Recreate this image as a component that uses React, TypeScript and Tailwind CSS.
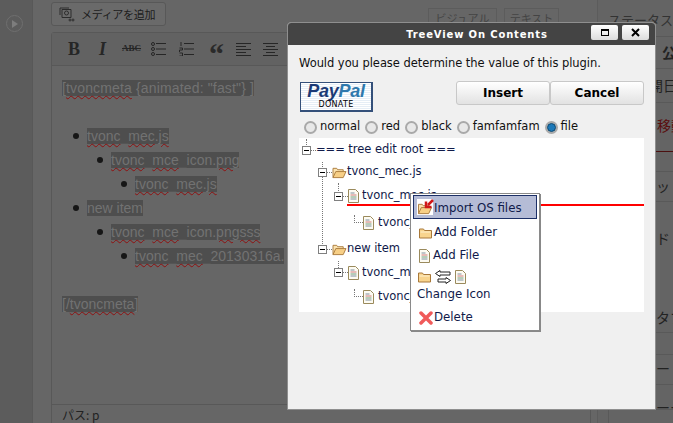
import React from "react";

const W = ({ children }: { children: React.ReactNode }) => (
  <span className="underline decoration-wavy decoration-[#8f1010] decoration-1 underline-offset-2">{children}</span>
);
const U = () => <span className="text-[#555555]">_</span>;

const Sel = ({ children }: { children: React.ReactNode }) => <span className="bg-[#4e4e4e] text-[#727272]">{children}</span>;

const Li = ({ indent, children }: { indent: string; children: React.ReactNode }) => (
  <div className={`flex items-center h-[24px] ${indent}`}>
    <span className="w-[6px] h-[6px] rounded-full bg-[#161616] mr-[8px] shrink-0" />
    <span className="whitespace-nowrap">{children}</span>
  </div>
);

const FolderOpen = ({ className = "" }: { className?: string }) => (
  <svg viewBox="0 0 16 14" className={className}>
    <path d="M1 12.5V2.5h4l1 1.5h6v2" fill="#fbe3b0" stroke="#a9793a" />
    <path d="M1 12.5L4 6h11l-3 6.5z" fill="#f7cf86" stroke="#a9793a" strokeLinejoin="round" />
  </svg>
);

const FolderClosed = ({ className = "" }: { className?: string }) => (
  <svg viewBox="0 0 13 12" className={className}>
    <path d="M.5 11V2h4l1 1.5h7V11z" fill="#f8d48e" stroke="#a9793a" strokeLinejoin="round" />
    <path d="M1.5 5h10" stroke="#fdf0cf" />
  </svg>
);

const FileIcon = ({ className = "" }: { className?: string }) => (
  <svg viewBox="0 0 11 14" className={className}>
    <path d="M.5.5h7l3 3v10H.5z" fill="#fdfbf2" stroke="#9a8a5c" />
    <path d="M2.5 4h4" stroke="#7f8f9f" />
    <path d="M2.5 6h6" stroke="#d07a7a" />
    <path d="M2.5 8h6" stroke="#6f9f7f" />
    <path d="M2.5 10h6" stroke="#7f8f9f" />
  </svg>
);

const Expander = () => (
  <span className="w-[9px] h-[9px] border border-[#808080] bg-white flex items-center justify-center shrink-0">
    <span className="w-[5px] h-px bg-black" />
  </span>
);

const Radio = ({ on }: { on?: boolean }) => (
  <span className="w-[13px] h-[13px] rounded-full border-2 border-[#a9a9a9] bg-[#e8e8e8] flex items-center justify-center shrink-0">
    {on && <span className="w-[9px] h-[9px] rounded-full bg-[#1b78b8] border border-[#0d4468]" />}
  </span>
);

const Cjk = "[font-family:'Noto_Sans_CJK_JP','Liberation_Sans',sans-serif]";

const TreeRow = ({
  h,
  pl,
  children,
  lines,
}: {
  h: string;
  pl: string;
  children: React.ReactNode;
  lines?: React.ReactNode;
}) => (
  <div className={`relative flex items-center whitespace-nowrap ${h} ${pl}`}>
    {lines}
    {children}
  </div>
);

const Dot = ({ className }: { className: string }) => <span className={`absolute border-dotted border-[#777] ${className}`} />;

export default function App() {
  return (
    <div className="relative w-[673px] h-[423px] overflow-hidden flex bg-[#666666] [font-family:'Liberation_Sans',sans-serif]">
      {/* left admin menu */}
      <div className="w-[33px] h-full bg-[#5c5c5c] border-r border-[#585858] shrink-0 pt-[15px] pl-[6px]">
        <div className="w-[17px] h-[17px] rounded-full border border-[#6f6f6f] flex items-center justify-center">
          <svg viewBox="0 0 8 8" className="w-[8px] h-[8px]">
            <path d="M1 0l6 4-6 4z" fill="#7d7d7d" />
          </svg>
        </div>
      </div>

      {/* editor column */}
      <div className="w-[564px] shrink-0 pl-[18px] flex flex-col">
        <div className="h-[32px] flex items-start">
          <div className="mt-[2px] w-[115px] h-[24px] rounded-[3px] border border-[#585858] bg-[#6a6a6a] flex items-center pl-[7px] gap-[6px]">
            <svg viewBox="0 0 16 16" className="w-[16px] h-[16px] shrink-0" fill="none" stroke="#2c2c2c">
              <path d="M3 3.5h9v8H3z" />
              <circle cx="7.5" cy="7" r="2" />
              <path d="M1 2v7M1 2h9" />
              <circle cx="11" cy="14" r="1" />
              <circle cx="14" cy="14" r="1" />
            </svg>
            <span className={`text-[11px] tracking-[-0.3px] leading-none whitespace-nowrap text-[#1c1c1c] ${Cjk}`}>メディアを追加</span>
          </div>
          <div className="ml-[262px] mt-[8px] w-[69px] h-[20px] border border-[#5c5c5c] flex justify-center pt-[4px]">
            <span className={`text-[11px] leading-none whitespace-nowrap text-[#444] ${Cjk}`}>ビジュアル</span>
          </div>
          <div className="ml-[7px] mt-[8px] w-[55px] h-[20px] border border-[#5c5c5c] flex justify-center pt-[4px]">
            <span className={`text-[11px] leading-none whitespace-nowrap text-[#444] ${Cjk}`}>テキスト</span>
          </div>
        </div>
        <div className="flex-1 mr-[6px] mb-[-20px] border border-[#585858] rounded-t-[3px] flex flex-col">
          <div className="h-[33px] bg-[#626262] border-b border-[#585858] flex items-center pl-[16px] shrink-0 text-[#262626]">
            <span className="w-[31px] text-[18px] font-bold [font-family:'Liberation_Serif',serif]">B</span>
            <span className="w-[23px] text-[18px] font-bold italic [font-family:'Liberation_Serif',serif]">I</span>
            <span className="w-[29px] text-[9px] font-bold line-through [font-family:'Liberation_Serif',serif]">ABC</span>
            <svg viewBox="0 0 16 14" className="w-[16px] h-[14px] mr-[12px]" fill="none" stroke="#262626">
              <circle cx="2" cy="2" r="1.5" />
              <circle cx="2" cy="7" r="1.5" />
              <circle cx="2" cy="12" r="1.5" />
              <path d="M5 1.5h10M5 7h10M5 12.5h10" />
            </svg>
            <svg viewBox="0 0 16 14" className="w-[16px] h-[14px] mr-[14px]" fill="none" stroke="#262626">
              <path d="M2 0v4M.5 6h3v2h-3v2M.5 11h3v3h-3" />
              <path d="M5 1.5h10M5 7h10M5 12.5h10" />
            </svg>
            <span className="w-[27px] h-[20px] text-[30px] leading-[30px] font-bold text-[#2a2a2a] [font-family:'Liberation_Serif',serif]">“</span>
            <svg viewBox="0 0 15 13" className="w-[15px] h-[13px] mr-[12px]" stroke="#262626">
              <path d="M0 .5h15M0 3.5h10M0 6.5h15M0 9.5h10M0 12.5h15" />
            </svg>
            <svg viewBox="0 0 15 13" className="w-[15px] h-[13px]" stroke="#262626">
              <path d="M0 .5h15M3 3.5h9M0 6.5h15M3 9.5h9M0 12.5h15" />
            </svg>
          </div>
          <div className="flex-1 pl-[10px] pt-[10px] text-[14px] text-[#727272] leading-[24px]">
            <div className="h-[24px] whitespace-nowrap tracking-[0.15px]">
              <Sel>
                [<W>tvoncmeta</W> {"{animated: \"fast\"}"} ]
              </Sel>
            </div>
            <div className="h-[24px]" />
            <div>
              <Li indent="pl-[11px]">
                <Sel>
                  <W>tvonc</W>
                  <U />
                  <W>mec</W>.<W>js</W>
                </Sel>
              </Li>
              <Li indent="pl-[35px]">
                <Sel>
                  <W>tvonc</W>
                  <U />
                  <W>mce</W>
                  <U />
                  icon.<W>png</W>
                </Sel>
              </Li>
              <Li indent="pl-[59px]">
                <Sel>
                  <W>tvonc</W>
                  <U />
                  <W>mec</W>.<W>js</W>
                </Sel>
              </Li>
              <Li indent="pl-[11px]">
                <Sel>new item</Sel>
              </Li>
              <Li indent="pl-[35px]">
                <Sel>
                  <W>tvonc</W>
                  <U />
                  <W>mce</W>
                  <U />
                  icon.<W>pngsss</W>
                </Sel>
              </Li>
              <Li indent="pl-[59px]">
                <Sel>
                  <W>tvonc</W>
                  <U />
                  <W>mec</W>
                  <U />
                  20130316a.
                </Sel>
              </Li>
            </div>
            <div className="mt-[24px] h-[24px] whitespace-nowrap">
              <Sel>
                [/<W>tvoncmeta</W>]
              </Sel>
            </div>
          </div>
          <div className={`h-[38px] border-t border-[#585858] shrink-0 pl-[10px] pt-[1px] text-[12px] text-[#222] ${Cjk}`}>パス: p</div>
        </div>
      </div>

      {/* right column */}
      <div className={`flex-1 border-l border-[#5c5c5c] bg-[#646464] text-[14px] text-[#222] whitespace-nowrap ${Cjk}`}>
        <div className="h-[37px] border-b border-[#595959] pl-[10px] pt-[13px] text-[13px] text-[#333] leading-none">ステータス: 公開</div>
        <div className="h-[32px] border-b border-[#595959] pl-[64px] font-bold flex items-center">公</div>
        <div className="h-[34px] border-b border-[#595959] flex items-center pl-[37px]">公開日時</div>
        <div className="h-[49px] border-b border-[#4c1010] pl-[59px] pt-[12px] text-[#5a0f0f]">移動</div>
        <div className="h-[20px] border-b border-[#595959]" />
        <div className="h-[30px] border-b border-[#595959] pl-[58px] pt-[4px]">ット</div>
        <div className="h-[131px] border-b border-[#595959] pl-[58px] pt-[26px] pb-[4px] flex flex-col justify-between">
          <span>ド</span>
          <span>タブ</span>
        </div>
        <div className="h-[21px]" />
        <div className="h-[31px] border-y border-[#595959] pl-[58px] pt-[3px]">ー</div>
        <div className="h-[25px] border-b border-[#595959] pl-[58px] leading-[44px]">ーー</div>
        <div className="h-[13px] ml-[10px] border-l border-[#595959]" />
      </div>

      {/* dialog */}
      <div className="absolute left-[287px] top-[22px] w-[369px] h-[388px] bg-[#f0f0f0] border border-[#8f8f8f] rounded-t-[4px] flex flex-col [font-family:'DejaVu_Sans',sans-serif]">
        <div className="relative h-[22px] bg-[#444444] rounded-t-[3px] flex items-center justify-center pl-[11px] shrink-0">
          <span className="text-[10px] font-bold text-white tracking-[0.85px]">TreeView On Contents</span>
          <div className="absolute right-[6px] top-[2px] flex gap-[4px]">
            <div className="w-[27px] h-[15px] rounded-[2px] bg-gradient-to-b from-white to-[#dcdcdc] flex items-center justify-center">
              <span className="w-[8px] h-[7px] border border-black border-t-2" />
            </div>
            <div className="w-[27px] h-[15px] rounded-[2px] bg-gradient-to-b from-white to-[#dcdcdc] flex items-center justify-center">
              <svg viewBox="0 0 9 9" className="w-[9px] h-[9px]">
                <path d="M1 1l7 7M8 1l-7 7" stroke="#000" strokeWidth="2" />
              </svg>
            </div>
          </div>
        </div>
        <div className="flex-1 px-[11px] flex flex-col min-h-0">
          <p className="mt-[11px] text-[11.5px] leading-[14px] text-[#111] tracking-[-0.05px] whitespace-nowrap">Would you please determine the value of this plugin.</p>
          <div className="mt-[11px] flex items-start justify-between">
            <div className="mt-px ml-[1px] w-[73px] h-[30px] border border-[#34507a] border-r-2 border-b-2 bg-[repeating-linear-gradient(180deg,#ffffff_0px,#ffffff_1px,#e6eef6_1px,#e6eef6_2px)] flex flex-col items-center">
              <span className="text-[18px] leading-[17px] font-bold italic [font-family:'Liberation_Sans',sans-serif] tracking-[-0.3px]">
                <span className="text-[#1b3a76]">Pay</span>
                <span className="text-[#2f79ad]">Pal</span>
              </span>
              <span className="text-[8px] leading-[9px] text-black tracking-[0.3px]">DONATE</span>
            </div>
            <div className="flex">
              <button className="w-[94px] h-[24px] rounded-[3px] border border-[#c8c8c8] bg-gradient-to-b from-white to-[#e2e2e2] text-[12px] font-bold text-black">Insert</button>
              <button className="w-[94px] h-[24px] rounded-[3px] border border-[#c8c8c8] bg-gradient-to-b from-white to-[#e2e2e2] text-[12px] font-bold text-black">Cancel</button>
            </div>
          </div>
          <div className="mt-[6px] ml-[5px] h-[18px] flex items-center text-[11.5px] text-[#111]">
            <Radio />
            <span className="ml-[3px] mr-[5px]">normal</span>
            <Radio />
            <span className="ml-[3px] mr-[5px]">red</span>
            <Radio />
            <span className="ml-[3px] mr-[5px]">black</span>
            <Radio />
            <span className="ml-[3px] mr-[5px]">famfamfam</span>
            <Radio on />
            <span className="ml-[3px]">file</span>
          </div>
          <div className="relative mt-[2px] h-[174px] pt-px bg-white text-[11.5px] tracking-[-0.05px] text-[#101a4a]">
            <TreeRow h="h-[22px]" pl="pl-[3px]" lines={<Dot className="left-[7px] top-0 h-[6px] border-l" />}>
              <Expander />
              <span className="w-[5px] border-t border-dotted border-[#777]" />
              <span>=== tree edit root ===</span>
            </TreeRow>
            <TreeRow
              h="h-[22px]"
              pl="pl-[19px]"
              lines={
                <>
                  <Dot className="left-[23px] top-[1px] h-[5px] border-l" />
                  <Dot className="left-[23px] top-[16px] h-[67px] border-l" />
                </>
              }
            >
              <Expander />
              <span className="w-[5px] border-t border-dotted border-[#777]" />
              <FolderOpen className="w-[15px] h-[13px] shrink-0" />
              <span>tvonc_mec.js</span>
            </TreeRow>
            <TreeRow h="h-[26px]" pl="pl-[35px]" lines={<Dot className="left-[39px] top-0 h-[8px] border-l" />}>
              <Expander />
              <span className="w-[5px] border-t border-dotted border-[#777]" />
              <FileIcon className="w-[11px] h-[14px] shrink-0 mr-[3px]" />
              <span>tvonc_mec.js</span>
            </TreeRow>
            <TreeRow h="h-[28px]" pl="pl-[55px]" lines={<Dot className="left-[55px] top-[6px] w-[9px] h-[8px] border-l border-b" />}>
              <span className="w-[9px]" />
              <FileIcon className="w-[11px] h-[14px] shrink-0 mr-[4px]" />
              <span>tvonc_mce</span>
            </TreeRow>
            <TreeRow h="h-[24px]" pl="pl-[19px]">
              <Expander />
              <span className="w-[5px] border-t border-dotted border-[#777]" />
              <FolderOpen className="w-[15px] h-[13px] shrink-0" />
              <span>new item</span>
            </TreeRow>
            <TreeRow h="h-[23px]" pl="pl-[35px]" lines={<Dot className="left-[39px] top-0 h-[7px] border-l" />}>
              <Expander />
              <span className="w-[5px] border-t border-dotted border-[#777]" />
              <FileIcon className="w-[11px] h-[14px] shrink-0 mr-[3px]" />
              <span>tvonc_mec.js</span>
            </TreeRow>
            <TreeRow h="h-[26px]" pl="pl-[55px]" lines={<Dot className="left-[55px] top-[5px] w-[9px] h-[8px] border-l border-b" />}>
              <span className="w-[9px]" />
              <FileIcon className="w-[11px] h-[14px] shrink-0 mr-[4px]" />
              <span>tvonc_mce</span>
            </TreeRow>
            {/* drop indicator */}
            <div className="absolute left-[48px] right-0 top-[66px] h-[2px] bg-[#ff0000]" />
          </div>
        </div>
      </div>

      {/* context menu */}
      <div className="absolute left-[410px] top-[193px] w-[130px] h-[138px] bg-white border border-[#8a8a8a] shadow-[1px_1px_0_#888] pt-px px-[2px] text-[11.8px] text-[#101a4a] [font-family:'DejaVu_Sans',sans-serif]">
        <div className="h-[24px] bg-[#b5bcd6] border border-[#1c2f66] flex items-center pl-[3px]">
          <div className="relative w-[16px] h-[16px] bg-white mr-[1px] flex items-end">
            <FolderOpen className="w-[16px] h-[13px]" />
            <svg viewBox="0 0 10 10" className="absolute right-[-1px] top-0 w-[10px] h-[10px]">
              <path d="M9 1L4 6M2 2.5V8h5.5" stroke="#d01818" strokeWidth="2.5" fill="none" />
            </svg>
          </div>
          <span className="pt-[3px]">Import OS files</span>
        </div>
        <div className="h-[24px] pt-[3px] flex items-center pl-[6px]">
          <FolderClosed className="w-[13px] h-[12px] mr-[2px]" />
          <span>Add Folder</span>
        </div>
        <div className="h-[24px] pt-[2px] flex items-center pl-[6px]">
          <FileIcon className="w-[11px] h-[14px] mr-[3px]" />
          <span>Add File</span>
        </div>
        <div className="h-[37px] pl-[4px] pt-[2px]">
          <div className="flex items-center h-[16px] pl-px">
            <FolderClosed className="w-[13px] h-[12px] mr-[4px]" />
            <svg viewBox="0 0 16 14" className="w-[16px] h-[14px] mr-[4px]" fill="#fff" stroke="#222">
              <path d="M5 .5L.5 3.5 5 6.5V5h10V2H5z" />
              <path d="M11 7.5l4.5 3-4.5 3V12H3V9h8z" />
            </svg>
            <FileIcon className="w-[11px] h-[14px]" />
          </div>
          <div className="leading-[15px] mt-[2px]">Change Icon</div>
        </div>
        <div className="h-[24px] pt-[3px] flex items-center pl-[6px]">
          <svg viewBox="0 0 14 14" className="w-[14px] h-[14px] mr-[1px]">
            <path d="M2 2l10 10M12 2L2 12" stroke="#f05a5a" strokeWidth="3.5" strokeLinecap="round" />
          </svg>
          <span>Delete</span>
        </div>
      </div>
    </div>
  );
}
